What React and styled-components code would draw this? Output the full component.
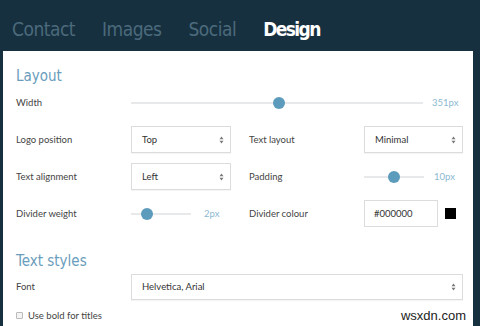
import React from "react";
import styled, { createGlobalStyle } from "styled-components";

const Global = createGlobalStyle`
  html, body { margin: 0; padding: 0; }
  body {
    width: 480px; height: 326px; overflow: hidden;
    background: #17303f;
    font-family: Lato, "Liberation Sans", sans-serif;
  }
`;

const Page = styled.div`
  position: relative;
  width: 480px;
  height: 326px;
  background: #17303f;
  display: flex;
  flex-direction: column;
`;

const Tabs = styled.nav`
  display: flex;
  align-items: flex-end;
  gap: 27px;
  height: 51px;
  flex: none;
  padding: 0 0 0 12px;
  box-sizing: border-box;
`;

const Tab = styled.span`
  font-family: "DejaVu Sans Condensed", "DejaVu Sans", sans-serif;
  font-size: 19px;
  line-height: 40px;
  height: 42px;
  color: ${(p) => (p.$active ? "#ffffff" : "#4b6a7c")};
  font-weight: ${(p) => (p.$active ? 700 : 400)};
  letter-spacing: ${(p) => (p.$active ? "-1.6px" : "-0.5px")};
`;

const Panel = styled.section`
  flex: 1;
  margin: 0 7px 0 3px;
  background: #fff;
  padding: 15px 10px 0 13px;
  display: flex;
  flex-direction: column;
`;

const Heading = styled.h2`
  margin: 0;
  font-family: "DejaVu Sans Condensed", "DejaVu Sans", sans-serif;
  font-weight: 400;
  font-size: 15px;
  line-height: 20px;
  color: #6a9dbb;
  margin-top: ${(p) => p.$top || 0}px;
`;

const Grid = styled.div`
  display: grid;
  grid-template-columns: 115px 118px 115px 1fr;
  grid-auto-rows: 27px;
  row-gap: 10px;
  align-items: center;
  margin-top: ${(p) => p.$top || 0}px;
`;

const Label = styled.span`
  font-size: 9.5px;
  color: #444;
`;

const Wide = styled.div`
  grid-column: ${(p) => p.$span};
  display: flex;
  align-items: center;
`;

const SliderWrap = styled.div`
  display: flex;
  align-items: center;
  gap: ${(p) => p.$gap}px;
`;

const Track = styled.div`
  position: relative;
  width: ${(p) => p.$w}px;
  height: 2px;
  background: #e7e9ea;
`;

const Thumb = styled.div`
  position: absolute;
  top: -5px;
  width: 12px;
  height: 12px;
  margin-left: -6px;
  border-radius: 50%;
  background: #5d9bbc;
`;

const Value = styled.span`
  font-size: 9.5px;
  color: #8bb9d2;
`;

const Select = styled.div`
  box-sizing: border-box;
  width: ${(p) => p.$w}px;
  height: ${(p) => p.$h || 27}px;
  border: 1px solid #dcdcdc;
  box-shadow: 0 1px 1px rgba(0, 0, 0, 0.04);
  display: flex;
  align-items: center;
  justify-content: space-between;
  padding: 0 6px 0 10px;
  font-size: 9.5px;
  color: #333;
`;

const Arrows = styled.svg`
  width: 5px;
  height: 8px;
`;

const ColorRow = styled.div`
  display: flex;
  align-items: center;
  gap: 7px;
`;

const ColorInput = styled.div`
  box-sizing: border-box;
  width: 74px;
  height: 27px;
  border: 1px solid #dcdcdc;
  display: flex;
  align-items: center;
  padding-left: 9px;
  font-size: 9.5px;
  color: #333;
`;

const Swatch = styled.div`
  width: 11px;
  height: 11px;
  background: #000;
`;

const CheckRow = styled.label`
  display: flex;
  align-items: center;
  gap: 5px;
  margin-top: 10px;
  font-size: 9.5px;
  color: #444;
`;

const Box = styled.span`
  box-sizing: border-box;
  width: 7px;
  height: 7px;
  border: 1px solid #bbb;
  border-radius: 1px;
  background: #f4f4f4;
`;

const Watermark = styled.span`
  position: absolute;
  right: 12px;
  bottom: 3px;
  font-family: "Liberation Sans", sans-serif;
  font-size: 13px;
  color: #222;
  background: #fff;
  padding: 0 2px;
`;

const UpDown = () => (
  <Arrows viewBox="0 0 5 8">
    <path d="M2.5 0.5 L4.5 3.2 H0.5 Z" fill="#777" />
    <path d="M2.5 7.5 L4.5 4.8 H0.5 Z" fill="#777" />
  </Arrows>
);

const Slider = ({ w, pct, value, gap }) => (
  <SliderWrap $gap={gap}>
    <Track $w={w}>
      <Thumb style={{ left: `${pct}%` }} />
    </Track>
    <Value>{value}</Value>
  </SliderWrap>
);

export default function App() {
  return (
    <Page>
      <Global />
      <Tabs>
        <Tab>Contact</Tab>
        <Tab>Images</Tab>
        <Tab>Social</Tab>
        <Tab $active>Design</Tab>
      </Tabs>
      <Panel>
        <Heading>Layout</Heading>
        <Grid $top={3}>
          <Label>Width</Label>
          <Wide $span="2 / 5">
            <Slider w={292} pct={50.7} value="351px" gap={9} />
          </Wide>

          <Label>Logo position</Label>
          <Select $w={100}>
            Top <UpDown />
          </Select>
          <Label>Text layout</Label>
          <Select $w={99}>
            Minimal <UpDown />
          </Select>

          <Label>Text alignment</Label>
          <Select $w={100}>
            Left <UpDown />
          </Select>
          <Label>Padding</Label>
          <Slider w={60} pct={50} value="10px" gap={10} />

          <Label>Divider weight</Label>
          <Slider w={60} pct={27} value="2px" gap={13} />
          <Label>Divider colour</Label>
          <ColorRow>
            <ColorInput>#000000</ColorInput>
            <Swatch />
          </ColorRow>
        </Grid>

        <Heading $top={24}>Text styles</Heading>
        <Grid $top={2}>
          <Label>Font</Label>
          <Wide $span="2 / 5">
            <Select $w={332} $h={26}>
              Helvetica, Arial <UpDown />
            </Select>
          </Wide>
        </Grid>
        <CheckRow>
          <Box />
          Use bold for titles
        </CheckRow>
      </Panel>
      <Watermark>wsxdn.com</Watermark>
    </Page>
  );
}
